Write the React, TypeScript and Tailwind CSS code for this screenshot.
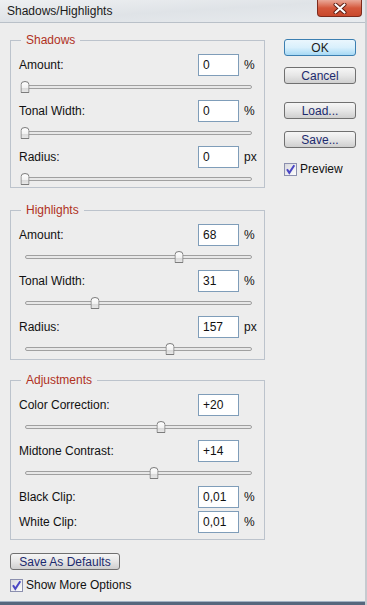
import React from 'react';

type Row = { label: string; value: string; unit?: string; pos?: number };

const shadows: Row[] = [
  { label: 'Amount:', value: '0', unit: '%', pos: 0 },
  { label: 'Tonal Width:', value: '0', unit: '%', pos: 0 },
  { label: 'Radius:', value: '0', unit: 'px', pos: 0 },
];

const highlights: Row[] = [
  { label: 'Amount:', value: '68', unit: '%', pos: 68 },
  { label: 'Tonal Width:', value: '31', unit: '%', pos: 31 },
  { label: 'Radius:', value: '157', unit: 'px', pos: 64 },
];

const adjustments: Row[] = [
  { label: 'Color Correction:', value: '+20', pos: 60 },
  { label: 'Midtone Contrast:', value: '+14', pos: 57 },
];

const clips: Row[] = [
  { label: 'Black Clip:', value: '0,01', unit: '%' },
  { label: 'White Clip:', value: '0,01', unit: '%' },
];

function Thumb() {
  return (
    <svg width="9" height="12" viewBox="0 0 9 12">
      <defs>
        <linearGradient id="thumbFill" x1="0" y1="0" x2="0" y2="1">
          <stop offset="0" stopColor="#ffffff" />
          <stop offset="0.55" stopColor="#f2f2f2" />
          <stop offset="0.56" stopColor="#d9d9d9" />
          <stop offset="1" stopColor="#e8e8e8" />
        </linearGradient>
      </defs>
      <path d="M0.5 11.5 V3.5 Q0.5 0.5 4.5 0.5 Q8.5 0.5 8.5 3.5 V11.5 Z" fill="url(#thumbFill)" stroke="#7c7c7c" />
    </svg>
  );
}

function Slider({ pos }: { pos: number }) {
  return (
    <div className="relative ml-[6px] mr-[4px] h-[19px]">
      <div className="absolute left-0 right-0 top-[9px] h-[4px] rounded-full border border-[#a0a0a0] bg-[#e8e8e8]" />
      <div className="absolute top-[5px] flex -translate-x-1/2" style={{ left: `${pos}%` }}>
        <Thumb />
      </div>
    </div>
  );
}

function FieldRow({ row }: { row: Row }) {
  return (
    <div className="flex h-[22px] items-center">
      <span className="flex-1">{row.label}</span>
      <div className="flex h-[22px] w-[41px] items-center border border-[#7f9db9] bg-white pl-[4px]">{row.value}</div>
      <span className="w-[17px] pl-[5px]">{row.unit}</span>
    </div>
  );
}

function Group({ title, className = '', children }: { title: string; className?: string; children: React.ReactNode }) {
  return (
    <fieldset className={`border border-[#bcc3cc] px-[8px] pt-[7px] ${className}`}>
      <legend className="ml-[2px] px-[5px] text-[12px] leading-[14px] text-[#b0311e]">{title}</legend>
      {children}
    </fieldset>
  );
}

function CheckBox() {
  return (
    <svg width="13" height="13" viewBox="0 0 13 13">
      <defs>
        <linearGradient id="cbFill" x1="0" y1="0" x2="1" y2="1">
          <stop offset="0" stopColor="#d6d6dc" />
          <stop offset="1" stopColor="#ffffff" />
        </linearGradient>
      </defs>
      <rect x="0.5" y="0.5" width="12" height="12" fill="url(#cbFill)" stroke="#8b8fae" />
      <path d="M3 6.2 L5.3 9.8 L10.3 2.2" fill="none" stroke="#4a46c4" strokeWidth="2" />
    </svg>
  );
}

function Button({ label, primary = false, className = '' }: { label: string; primary?: boolean; className?: string }) {
  return (
    <div
      className={`flex h-[17px] items-center justify-center rounded-[3px] border text-[12px] leading-none ${
        primary
          ? 'border-[#3c7fb1] bg-gradient-to-b from-[#eaf6fd] via-[#d9f0fc] to-[#a7d9f5] text-[#1b1b1b]'
          : 'border-[#707070] bg-gradient-to-b from-[#f6f6f6] via-[#e6e6e6] to-[#cfcfcf] text-[#1c2a6e]'
      } ${className}`}
    >
      {label}
    </div>
  );
}

export default function App() {
  return (
    <div className="flex h-[605px] w-[367px] flex-col overflow-hidden border-r-[2px] border-[#c6cacf] bg-[#ededed] font-['Liberation_Sans',Arial,sans-serif] text-[12px] text-[#111]">
      {/* title bar */}
      <div className="flex h-[23px] shrink-0 items-start justify-between border-b border-[#b9c0c8] bg-gradient-to-br from-[#eef0f2] via-[#dfe3e7] to-[#e8ebee]">
        <span className="pl-[7px] pt-[4px] text-[12px] leading-[15px] text-[#1a1a1a]">Shadows/Highlights</span>
        <div className="mr-[3px] flex h-[17px] w-[45px] items-center justify-center rounded-b-[4px] border border-t-0 border-[#7d2a1c] bg-gradient-to-b from-[#e9a898] via-[#d4583c] to-[#c8482c]">
          <svg width="14" height="11" viewBox="0 0 14 11">
            <path d="M2.5 1.5 L11.5 9.5 M11.5 1.5 L2.5 9.5" stroke="#5a1a10" strokeWidth="4" strokeLinecap="round" />
            <path d="M2.5 1.5 L11.5 9.5 M11.5 1.5 L2.5 9.5" stroke="#ffffff" strokeWidth="2.2" strokeLinecap="round" />
          </svg>
        </div>
      </div>

      {/* body */}
      <div className="flex flex-1 pl-[10px] pt-[10px]">
        <div className="flex w-[255px] flex-col">
          <Group title="Shadows">
            <div className="flex flex-col gap-[5px]">
              {shadows.map((r) => (
                <div key={r.label}>
                  <FieldRow row={r} />
                  <Slider pos={r.pos ?? 0} />
                </div>
              ))}
            </div>
          </Group>

          <Group title="Highlights" className="mt-[15px] pb-[2px]">
            <div className="flex flex-col gap-[5px]">
              {highlights.map((r) => (
                <div key={r.label}>
                  <FieldRow row={r} />
                  <Slider pos={r.pos ?? 0} />
                </div>
              ))}
            </div>
          </Group>

          <Group title="Adjustments" className="mt-[13px] pb-[6px]">
            <div className="flex flex-col gap-[5px]">
              {adjustments.map((r) => (
                <div key={r.label}>
                  <FieldRow row={r} />
                  <Slider pos={r.pos ?? 0} />
                </div>
              ))}
              <div className="flex flex-col gap-[3px]">
                {clips.map((r) => (
                  <FieldRow key={r.label} row={r} />
                ))}
              </div>
            </div>
          </Group>

          <Button label="Save As Defaults" className="mt-[13px] w-[110px]" />
          <div className="mt-[9px] flex items-center gap-[3px]">
            <CheckBox />
            <span className="leading-[13px]">Show More Options</span>
          </div>
        </div>

        <div className="ml-[19px] flex w-[72px] flex-col pt-[6px]">
          <Button label="OK" primary />
          <Button label="Cancel" className="mt-[11px]" />
          <Button label="Load..." className="mt-[18px]" />
          <Button label="Save..." className="mt-[12px]" />
          <div className="mt-[15px] flex items-center gap-[3px]">
            <CheckBox />
            <span className="leading-[13px]">Preview</span>
          </div>
        </div>
      </div>

      {/* bottom frame */}
      <div className="h-[4px] shrink-0 border-t border-[#a3b2c4] bg-[#56677d]" />
    </div>
  );
}
